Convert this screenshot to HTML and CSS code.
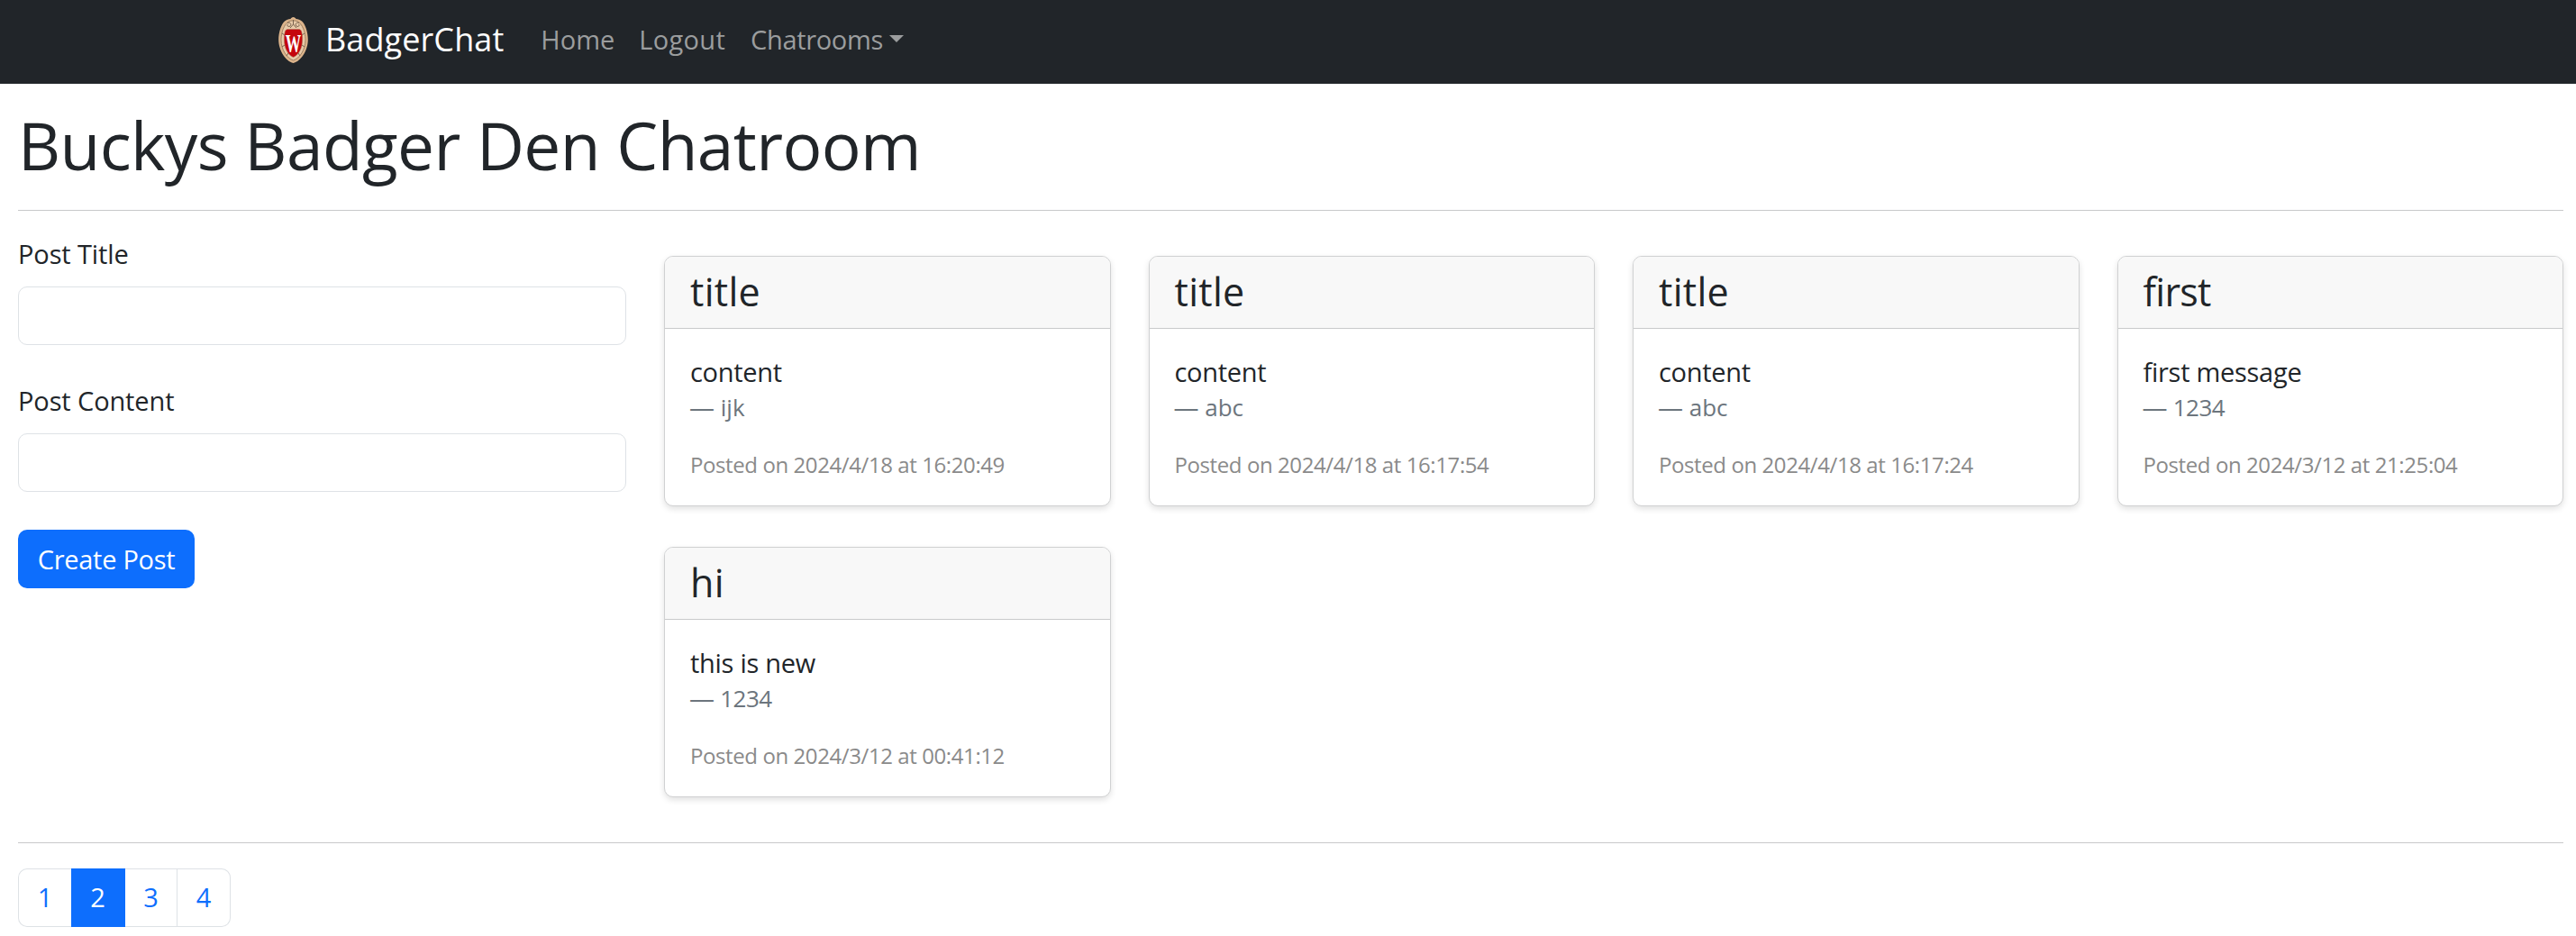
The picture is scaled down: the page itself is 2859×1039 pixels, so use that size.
FILE: index.html
```html
<!DOCTYPE html>
<html lang="en">
<head>
<meta charset="utf-8">
<title>BadgerChat</title>
<link rel="stylesheet" href="styles.css">
</head>
<body>
<nav class="navbar">
  <a class="brand">
    <svg class="crest" viewBox="0 0 33 51" width="33" height="51">
      <path d="M16.500 0C18 0 19 1 19.500 2C22 2 24 3 26 4.500C30 8 32.800 17 32.800 25C32.800 37 25 49 16.500 51C8 49 .2 37 .2 25C.2 17 3 8 7 4.500C9 3 11 2 13.500 2C14 1 15 0 16.500 0Z" fill="#dcb48b"/>
      <path d="M16.500 4C25 3 30 15 30 25.500C30 36 23.500 46 16.500 48C9.500 46 3 36 3 25.500C3 15 8 3 16.500 4Z" fill="#e8cba9" stroke="#8e7156" stroke-width=".8"/>
      <path d="M10 6.500C13 5 15 8 13 10C11 11.500 9 9.500 10.500 8M23 6.500C20 5 18 8 20 10C22 11.500 24 9.500 22.500 8M16.500 3V8M13 12L16.500 8L20 12M4 18L7 20M29 18L26 20M4 33L7 31M29 33L26 31M9 43L11 40M24 43L22 40" fill="none" stroke="#78614d" stroke-width="1"/>
      <path d="M7.500 15.500C8 14.500 9 13.500 10 13.500H23C24 13.500 25 14.500 25.500 15.500C27 20 27.500 30 24 37C22 41 19 43.500 16.500 44.500C14 43.500 11 41 9 37C5.500 30 6 20 7.500 15.500Z" fill="#c5050c" stroke="#a37b5e" stroke-width=".5"/>
      <text class="crest-letter" transform="translate(16.5 38.5) scale(.58 1)" text-anchor="middle">W</text>
    </svg>
    <span>BadgerChat</span>
  </a>
  <a class="nav-link">Home</a>
  <a class="nav-link logout">Logout</a>
  <a class="nav-link dropdown">Chatrooms</a>
</nav>
<main class="page">
  <h1>Buckys Badger Den Chatroom</h1>
  <hr>
  <div class="room">
    <form class="post-form">
      <label for="post-title">Post Title</label>
      <input id="post-title" type="text">
      <label for="post-content">Post Content</label>
      <input id="post-content" type="text">
      <button type="button">Create Post</button>
    </form>
    <section class="cards">
      <article class="card">
        <h2>title</h2>
        <div class="card-body"><p class="content">content</p><p class="author"><span class="dash">—</span> ijk</p><p class="date">Posted on 2024/4/18 at 16:20:49</p></div>
      </article>
      <article class="card">
        <h2>title</h2>
        <div class="card-body"><p class="content">content</p><p class="author"><span class="dash">—</span> abc</p><p class="date">Posted on 2024/4/18 at 16:17:54</p></div>
      </article>
      <article class="card">
        <h2>title</h2>
        <div class="card-body"><p class="content">content</p><p class="author"><span class="dash">—</span> abc</p><p class="date">Posted on 2024/4/18 at 16:17:24</p></div>
      </article>
      <article class="card">
        <h2 class="tight">first</h2>
        <div class="card-body"><p class="content">first message</p><p class="author num"><span class="dash">—</span> 1234</p><p class="date">Posted on 2024/3/12 at 21:25:04</p></div>
      </article>
      <article class="card">
        <h2>hi</h2>
        <div class="card-body"><p class="content">this is new</p><p class="author num"><span class="dash">—</span> 1234</p><p class="date">Posted on 2024/3/12 at 00:41:12</p></div>
      </article>
    </section>
  </div>
  <hr>
  <ul class="pagination">
    <li>1</li><li class="active">2</li><li>3</li><li>4</li>
  </ul>
</main>
</body>
</html>
```
FILE: styles.css
```css
* { box-sizing: border-box; }
body {
  margin: 0;
  background: #fff;
  color: #212529;
  font-family: "Open Sans", "Noto Sans", sans-serif;
  font-size: 29px;
}
h1, h2, p, ul { margin: 0; padding: 0; font-weight: 400; }

.navbar {
  display: flex;
  align-items: center;
  height: 93px;
  padding: 0 0 7px 309px;
  background: #212529;
}
.brand {
  display: flex;
  align-items: center;
  margin-right: 41px;
  color: #fff;
  font-size: 36px;
  line-height: 54px;
  letter-spacing: .1px;
}
.brand span { padding-top: 1px; }
.crest { margin: 2px 19px 0 0; overflow: visible; }
.crest-letter { font: bold 30px "Liberation Serif", serif; fill: #fff; letter-spacing: 0; }
.nav-link { margin-right: 27px; color: #9b9d9e; line-height: 43px; }
.logout { letter-spacing: .3px; }
.dropdown { display: flex; align-items: center; margin-left: 1px; letter-spacing: -.34px; }
.dropdown::after {
  content: "";
  margin-left: 7px;
  border: 8px solid transparent;
  border-top-color: #9b9d9e;
  border-bottom: 0;
}

.page { padding: 24px 14px 0 20px; }
h1 { font-size: 73px; line-height: 88px; letter-spacing: -.6px; }
hr { height: 1px; margin: 28px 0 0; border: 0; background: #c8c9ca; }

.room {
  display: grid;
  grid-template-columns: 675px 1fr;
  column-gap: 42px;
}
.post-form {
  display: flex;
  flex-direction: column;
  align-items: flex-start;
  padding-top: 26px;
}
label { line-height: 43px; letter-spacing: -.12px; }
input {
  width: 100%;
  height: 65px;
  margin: 15px 0 40px;
  border: 1px solid #dee2e6;
  border-radius: 10px;
  background: #fff;
  font: inherit;
}
button {
  width: 196px;
  height: 65px;
  margin-top: 2px;
  padding: 0 0 1px;
  border: 0;
  border-radius: 10px;
  background: #0d6efd;
  color: #fff;
  font: inherit;
  letter-spacing: -.29px;
}

.cards {
  display: grid;
  grid-template-columns: repeat(4, 1fr);
  gap: 45px 42px;
  padding: 50px 0 22px;
}
.card {
  height: 278px;
  border: 1px solid #d0d1d2;
  border-radius: 10px;
  background: #fff;
  box-shadow: 0 3px 7px rgba(0, 0, 0, .12);
  overflow: hidden;
}
.card h2 {
  height: 80px;
  padding: 13px 28px 14px;
  border-bottom: 1px solid #c9cacb;
  background: #f8f8f8;
  font-size: 43px;
  line-height: 52px;
  letter-spacing: .3px;
}
.card h2.tight { letter-spacing: -.7px; }
.card-body { padding: 28px; }
.content { line-height: 40px; letter-spacing: -.28px; }
.author { color: #6c757d; font-size: 26px; line-height: 38px; }
.num { letter-spacing: -.5px; }
.dash { margin-left: -1px; font-size: 28px; line-height: 1; letter-spacing: 0; }
.date { margin-top: 27px; color: #8a8a8a; font-size: 24px; line-height: 36px; letter-spacing: -.41px; }

.pagination {
  display: grid;
  grid-template-columns: 59px 60px 58px 59px;
  width: 236px;
  height: 65px;
  margin-top: 28px;
  list-style: none;
}
.pagination li {
  border: 1px solid #dee2e6;
  border-left: 0;
  color: #0d6efd;
  line-height: 62px;
  text-align: center;
}
.pagination li:first-child { border-left: 1px solid #dee2e6; border-right: 0; border-radius: 10px 0 0 10px; }
.pagination li:last-child { border-radius: 0 10px 10px 0; }
.pagination .active { border-color: #0d6efd; background: #0d6efd; color: #fff; }
```
